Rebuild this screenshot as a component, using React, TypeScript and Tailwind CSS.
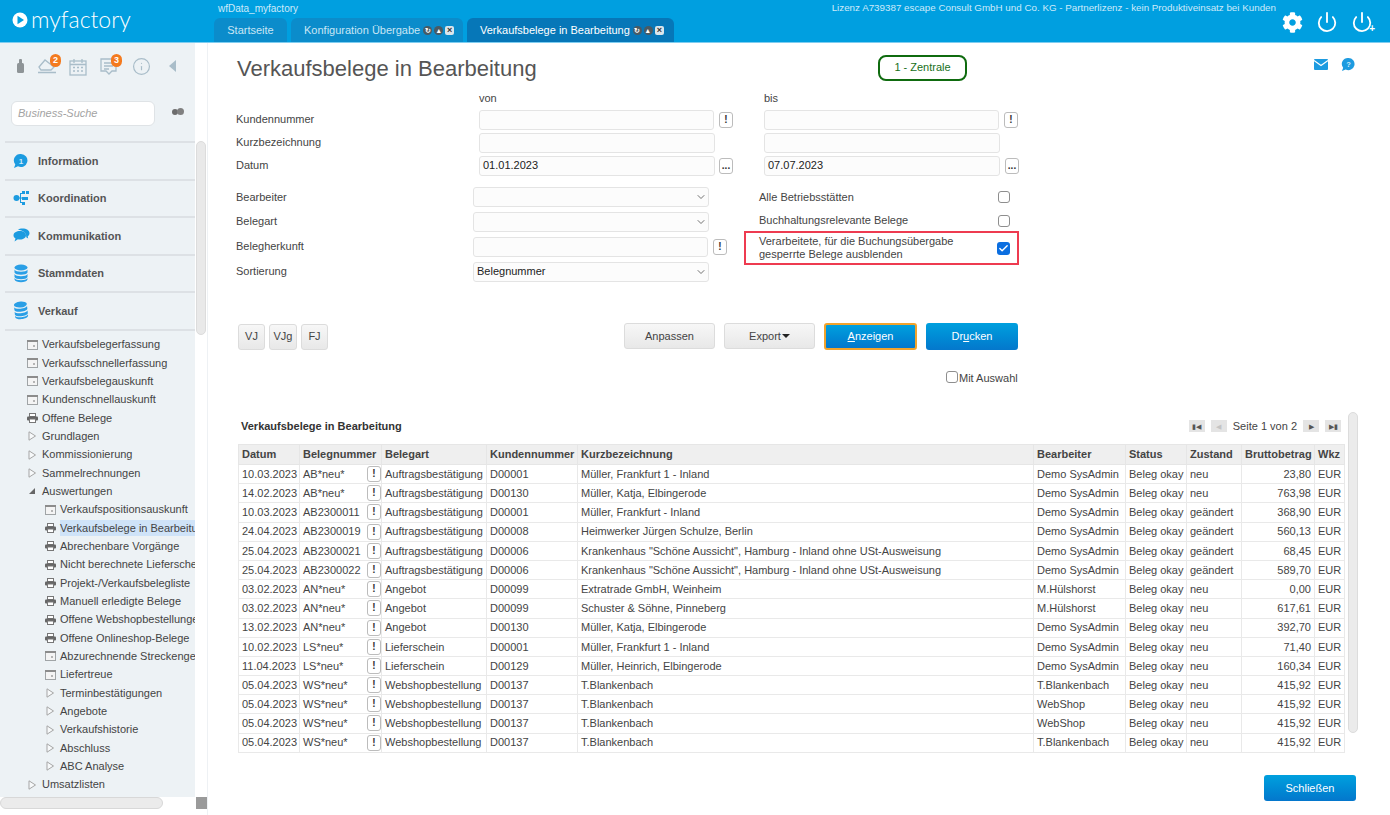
import { ChevronDown, Power, Check, Info } from 'lucide-react'
import { FaCog } from 'react-icons/fa'

const FONT = "font-['Liberation_Sans',Arial,sans-serif]"

const rows = [
  ['10.03.2023', 'AB*neu*', 'Auftragsbestätigung', 'D00001', 'Müller, Frankfurt 1 - Inland', 'Demo SysAdmin', 'neu', '23,80'],
  ['14.02.2023', 'AB*neu*', 'Auftragsbestätigung', 'D00130', 'Müller, Katja, Elbingerode', 'Demo SysAdmin', 'neu', '763,98'],
  ['10.03.2023', 'AB2300011', 'Auftragsbestätigung', 'D00001', 'Müller, Frankfurt - Inland', 'Demo SysAdmin', 'geändert', '368,90'],
  ['24.04.2023', 'AB2300019', 'Auftragsbestätigung', 'D00008', 'Heimwerker Jürgen Schulze, Berlin', 'Demo SysAdmin', 'geändert', '560,13'],
  ['25.04.2023', 'AB2300021', 'Auftragsbestätigung', 'D00006', 'Krankenhaus "Schöne Aussicht", Hamburg - Inland ohne USt-Ausweisung', 'Demo SysAdmin', 'geändert', '68,45'],
  ['25.04.2023', 'AB2300022', 'Auftragsbestätigung', 'D00006', 'Krankenhaus "Schöne Aussicht", Hamburg - Inland ohne USt-Ausweisung', 'Demo SysAdmin', 'geändert', '589,70'],
  ['03.02.2023', 'AN*neu*', 'Angebot', 'D00099', 'Extratrade GmbH, Weinheim', 'M.Hülshorst', 'neu', '0,00'],
  ['03.02.2023', 'AN*neu*', 'Angebot', 'D00099', 'Schuster & Söhne, Pinneberg', 'M.Hülshorst', 'neu', '617,61'],
  ['13.02.2023', 'AN*neu*', 'Angebot', 'D00130', 'Müller, Katja, Elbingerode', 'Demo SysAdmin', 'neu', '392,70'],
  ['10.02.2023', 'LS*neu*', 'Lieferschein', 'D00001', 'Müller, Frankfurt 1 - Inland', 'Demo SysAdmin', 'neu', '71,40'],
  ['11.04.2023', 'LS*neu*', 'Lieferschein', 'D00129', 'Müller, Heinrich, Elbingerode', 'Demo SysAdmin', 'neu', '160,34'],
  ['05.04.2023', 'WS*neu*', 'Webshopbestellung', 'D00137', 'T.Blankenbach', 'T.Blankenbach', 'neu', '415,92'],
  ['05.04.2023', 'WS*neu*', 'Webshopbestellung', 'D00137', 'T.Blankenbach', 'WebShop', 'neu', '415,92'],
  ['05.04.2023', 'WS*neu*', 'Webshopbestellung', 'D00137', 'T.Blankenbach', 'WebShop', 'neu', '415,92'],
  ['05.04.2023', 'WS*neu*', 'Webshopbestellung', 'D00137', 'T.Blankenbach', 'T.Blankenbach', 'neu', '415,92'],
]

const tree: { label: string; icon: 'win' | 'print' | 'tri' | 'open'; level: number; active?: boolean }[] = [
  { label: 'Verkaufsbelegerfassung', icon: 'win', level: 0 },
  { label: 'Verkaufsschnellerfassung', icon: 'win', level: 0 },
  { label: 'Verkaufsbelegauskunft', icon: 'win', level: 0 },
  { label: 'Kundenschnellauskunft', icon: 'win', level: 0 },
  { label: 'Offene Belege', icon: 'print', level: 0 },
  { label: 'Grundlagen', icon: 'tri', level: 0 },
  { label: 'Kommissionierung', icon: 'tri', level: 0 },
  { label: 'Sammelrechnungen', icon: 'tri', level: 0 },
  { label: 'Auswertungen', icon: 'open', level: 0 },
  { label: 'Verkaufspositionsauskunft', icon: 'win', level: 1 },
  { label: 'Verkaufsbelege in Bearbeitung', icon: 'print', level: 1, active: true },
  { label: 'Abrechenbare Vorgänge', icon: 'print', level: 1 },
  { label: 'Nicht berechnete Lieferscheine', icon: 'print', level: 1 },
  { label: 'Projekt-/Verkaufsbelegliste', icon: 'print', level: 1 },
  { label: 'Manuell erledigte Belege', icon: 'print', level: 1 },
  { label: 'Offene Webshopbestellungen', icon: 'print', level: 1 },
  { label: 'Offene Onlineshop-Belege', icon: 'print', level: 1 },
  { label: 'Abzurechnende Streckengeschäfte', icon: 'win', level: 1 },
  { label: 'Liefertreue', icon: 'win', level: 1 },
  { label: 'Terminbestätigungen', icon: 'tri', level: 1 },
  { label: 'Angebote', icon: 'tri', level: 1 },
  { label: 'Verkaufshistorie', icon: 'tri', level: 1 },
  { label: 'Abschluss', icon: 'tri', level: 1 },
  { label: 'ABC Analyse', icon: 'tri', level: 1 },
  { label: 'Umsatzlisten', icon: 'tri', level: 0 },
]

const TreeIcon = ({ type }: { type: string }) => {
  if (type === 'win')
    return (
      <svg width="11" height="10" viewBox="0 0 11 10">
        <rect x="0.5" y="0.5" width="10" height="9" fill="#f4f4f4" stroke="#a0a4a6" />
        <rect x="0" y="0" width="11" height="2" fill="#8c8c8c" />
        <rect x="6" y="5" width="2" height="2" fill="#b5b5b5" />
      </svg>
    )
  if (type === 'print')
    return (
      <svg width="11" height="10" viewBox="0 0 11 10">
        <rect x="2.5" y="0.5" width="6" height="3" fill="#fff" stroke="#777" />
        <rect x="0" y="3.5" width="11" height="4" rx="1" fill="#666" />
        <rect x="2.5" y="6" width="6" height="3.5" fill="#fff" stroke="#777" />
      </svg>
    )
  if (type === 'open')
    return (
      <svg width="10" height="10" viewBox="0 0 10 10">
        <path d="M8 2v6H2z" fill="#666" />
      </svg>
    )
  return (
    <svg width="10" height="10" viewBox="0 0 10 10">
      <path d="M2 .8 8.5 5 2 9.2z" fill="#f7f9fa" stroke="#a5a5a5" />
    </svg>
  )
}

const DbIcon = ({ tilt }: { tilt?: boolean }) => (
  <svg width="16" height="19" viewBox="0 0 16 19" className={tilt ? '-rotate-6' : ''}>
    <ellipse cx="8" cy="3.5" rx="6.5" ry="3" fill="#2a9fe6" />
    <path d="M1.5 5.5c1 3 12 3 13 0v3c-1 3-12 3-13 0z" fill="#2a9fe6" />
    <path d="M1.5 10c1 3 12 3 13 0v3c-1 3-12 3-13 0z" fill="#2a9fe6" />
    <path d="M1.5 14c1 3 12 3 13 0v1.5c-1 3.5-12 3.5-13 0z" fill="#2a9fe6" />
  </svg>
)

const SectionIcon = ({ name }: { name: string }) => {
  if (name === 'Information')
    return (
      <svg width="16" height="16" viewBox="0 0 16 16">
        <path d="M8 1a6.5 6.5 0 1 1-3 12.3L1 15l1.3-3.5A6.5 6.5 0 0 1 8 1z" fill="#1c9be0" />
        <text x="8" y="11" fontSize="8" fontWeight="700" textAnchor="middle" fill="#cfeafa">1</text>
      </svg>
    )
  if (name === 'Koordination')
    return (
      <svg width="16" height="16" viewBox="0 0 16 16" fill="#1c9be0">
        <circle cx="3.5" cy="8" r="3" />
        <rect x="9" y="1" width="3" height="3" />
        <rect x="13" y="1" width="3" height="3" />
        <rect x="9" y="7" width="6" height="3" />
        <rect x="9" y="12" width="3" height="3" />
        <path d="M5 7.5h4v1H5zM7 3h2v1H8v8h1v1H7z" />
      </svg>
    )
  if (name === 'Kommunikation')
    return (
      <svg width="17" height="15" viewBox="0 0 17 15" fill="#1c9be0">
        <path d="M7 3c3.5 0 6 1.800 6 4.300S10.500 11.600 7 11.600c-.8 0-1.500-.1-2.100-.3L1.500 13.500l1-3C1.100 9.700.5 8.600.5 7.300.5 4.800 3.500 3 7 3z" />
        <path d="M5 1.800C6 .9 7.500.5 9.500.5c4 0 7 2 7 4.700 0 1.400-.7 2.400-1.800 3.200l.5 2-2-1.200c.6-3.700-3-7-8.700-7.400z" />
      </svg>
    )
  return <DbIcon tilt={name === 'Verkauf'} />
}

const Badge = ({ n, className }: { n: number; className: string }) => (
  <span className={`absolute ${className} flex h-[13px] w-[11px] items-center justify-center rounded-full bg-[#f47a1f] text-[9px] leading-none font-bold text-white`}>
    {n}
  </span>
)

const Sidebar = () => (
  <aside className="relative flex w-[208px] shrink-0 flex-col overflow-hidden border-r border-[#eef1f4] bg-white">
    <div className="flex h-full w-[195px] flex-col bg-[#edf2f5]">
      {/* icon row */}
      <div className="flex h-[34px] shrink-0 items-end gap-[9px] pb-[1px] pl-[15px] text-[#a9bdc9]">
        <svg width="11" height="15" viewBox="0 0 11 15" fill="#8e9497" className="mb-[2px]">
          <rect x="4" y="0" width="3" height="5" rx="1" />
          <rect x="2" y="4" width="7" height="10" rx="1.5" />
        </svg>
        <span className="relative ml-[3px] block h-[18px] w-[22px]">
          <svg width="19" height="16" viewBox="0 0 19 16" fill="none" stroke="#a9bdc9" strokeWidth="1.3">
            <path d="M1 9 7 2l9 7-3 3H3zM0 14.5h18" />
          </svg>
          <Badge n={2} className="top-[-4px] left-[12px]" />
        </span>
        <svg width="18" height="18" viewBox="0 0 18 18" fill="none" stroke="#a9bdc9" strokeWidth="1.3">
          <rect x="1" y="3" width="16" height="14" />
          <path d="M1 6.5h16M5 1v4M13 1v4M4 9.5h2M8 9.5h2M12 9.5h2M4 13h2M8 13h2M12 13h2" />
        </svg>
        <span className="relative ml-[4px] block h-[18px] w-[22px]">
          <svg width="17" height="18" viewBox="0 0 17 18" fill="none" stroke="#a9bdc9" strokeWidth="1.3">
            <path d="M1 1h15v12h-4l-3 3-3-3H1zM4 5h9M4 8h9M4 11h5" />
          </svg>
          <Badge n={3} className="top-[-4px] left-[11px]" />
        </span>
        <Info size={19} strokeWidth={1.5} className="ml-[1px]" />
        <span className="mb-[4px] ml-[9px] h-0 w-0 border-y-[6px] border-r-[7px] border-y-transparent border-r-[#a9bdc9]" />
      </div>

      {/* search */}
      <div className="mt-[24px] flex shrink-0 items-center pl-[11px]">
        <div className="flex h-[25px] w-[144px] items-center rounded-[6px] border border-[#dfe3e6] bg-white pl-[6px] text-[11px] text-[#a3a3a3] italic">
          Business-Suche
        </div>
        <span className="mb-[3px] ml-[17px] flex items-center">
          <span className="h-[6px] w-[6px] rounded-full bg-[#6d6d6d]" />
          <span className="mb-[1px] -ml-[1px] h-[7px] w-[7px] rounded-full bg-[#808080]" />
        </span>
      </div>

      {/* sections */}
      <div className="mt-[15px] ml-[5px] shrink-0 border-t-2 border-[#dde1e5]">
        {['Information', 'Koordination', 'Kommunikation', 'Stammdaten', 'Verkauf'].map((name) => (
          <div key={name} className="flex h-[37.5px] items-center border-b-2 border-[#dde1e5] text-[11px] font-bold text-[#555]">
            <span className="flex w-[33px] justify-center pr-[2px] pl-[1px]">
              <SectionIcon name={name} />
            </span>
            {name}
          </div>
        ))}
      </div>

      {/* tree */}
      <div className="mt-[5px] overflow-hidden">
        {tree.map((t) => (
          <div
            key={t.label}
            className={`flex h-[18.33px] items-center text-[11px] whitespace-nowrap text-[#444] ${t.level === 1 ? 'pl-[45px]' : 'pl-[27px]'}`}
          >
            <span className="flex w-[15px] shrink-0">
              <TreeIcon type={t.icon} />
            </span>
            <span className={t.active ? 'bg-[#cfe3f8]' : ''}>{t.label}</span>
          </div>
        ))}
      </div>
    </div>

    {/* scrollbars */}
    <div className="absolute top-[98px] left-[196px] h-[194px] w-[10px] rounded-[5px] border border-[#dcdcdc] bg-[#e9e9e9]" />
    <div className="absolute bottom-0 left-0 flex h-[18px] w-[207px] items-start bg-white">
      <div className="h-[12px] w-[163px] rounded-[6px] border border-[#d8d8d8] bg-[#ebebeb]" />
      <div className="ml-[33px] h-[12px] w-[11px] bg-[#9a9a9a]" />
    </div>
  </aside>
)

const Field = ({ w, value, select }: { w: string; value?: string; select?: boolean }) => (
  <div className={`flex h-[20px] ${w} items-center justify-between rounded-[3px] border border-[#e4e4e4] bg-[#fcfcfc] pr-[1px] pl-[3px] text-[11px] text-[#222]`}>
    <span>{value}</span>
    {select && <ChevronDown size={12} strokeWidth={1.5} className="text-[#444]" />}
  </div>
)

const MiniBtn = ({ children }: { children: string }) => (
  <span className="flex h-[16px] w-[14px] items-center justify-center rounded-[3px] border border-[#bcbcbc] bg-white text-[10px] leading-none font-bold text-[#333]">
    {children}
  </span>
)

const FormRow = ({ label, children }: { label: string; children: React.ReactNode }) => (
  <div className="flex h-[23px] items-center">
    <span className="w-[243px] text-[11px] text-[#444]">{label}</span>
    {children}
  </div>
)

const Checkbox = ({ checked }: { checked?: boolean }) =>
  checked ? (
    <span className="flex h-[13px] w-[13px] items-center justify-center rounded-[3px] bg-[#0b6ee0]">
      <Check size={11} strokeWidth={3} className="text-white" />
    </span>
  ) : (
    <span className="block h-[12px] w-[12px] rounded-[3px] border border-[#8e8e8e] bg-white" />
  )

const GreyBtn = ({ children, w }: { children: React.ReactNode; w: string }) => (
  <button className={`h-[26px] ${w} rounded-[3px] border border-[#dcdcdc] bg-gradient-to-b from-[#f7f7f7] to-[#e8e8e8] text-[11px] text-[#444]`}>
    {children}
  </button>
)

const PagerBtn = ({ children, dim }: { children: React.ReactNode; dim?: boolean }) => (
  <span className={`flex h-[12px] w-[16px] items-center justify-center bg-[#e4e4e4] text-[7px] leading-none ${dim ? 'text-[#c4c4c4]' : 'text-[#555]'}`}>
    {children}
  </span>
)

const th = 'border border-[#e6e6e6] bg-[#efefef] px-[3px] text-left text-[11px] font-bold text-[#444]'
const td = 'border border-[#e9e9e9] px-[3px] text-[11px] whitespace-nowrap text-[#444]'

const Main = () => (
  <main className="relative flex flex-1 flex-col pl-[28px]">
    {/* title row */}
    <div className="flex h-[51px] items-center">
      <h1 className="w-[642px] pl-px text-[22px] leading-none text-[#555]">Verkaufsbelege in Bearbeitung</h1>
      <div className="mb-[2px] flex h-[26px] w-[89px] items-center justify-center rounded-[8px] border-2 border-[#0f6b0f] text-[11px] text-[#17701a]">
        1 - Zentrale
      </div>
      <svg width="14" height="11" viewBox="0 0 14 11" className="mb-[9px] ml-[347px]">
        <rect width="14" height="11" rx="1" fill="#1d9be0" />
        <path d="M0 1.5 7 6.5l7-5" fill="none" stroke="#fff" strokeWidth="1.2" />
      </svg>
      <svg width="15" height="15" viewBox="0 0 16 16" className="mb-[9px] ml-[13px]">
        <path d="M8 1a6.5 6.5 0 1 1-3 12.3L1 15l1.3-3.5A6.5 6.5 0 0 1 8 1z" fill="#1d9be0" />
        <text x="8" y="11" fontSize="8" fontWeight="700" textAnchor="middle" fill="#d6eefb">?</text>
      </svg>
    </div>

    {/* von / bis */}
    <div className="flex h-[8px] items-center text-[11px] text-[#444]">
      <span className="ml-[243px] w-[285px]">von</span>
      <span>bis</span>
    </div>

    <div className="mt-[6px]">
      <FormRow label="Kundennummer">
        <Field w="w-[235px]" />
        <span className="ml-[5px]"><MiniBtn>!</MiniBtn></span>
        <span className="ml-[31px]"><Field w="w-[235px]" /></span>
        <span className="ml-[5px]"><MiniBtn>!</MiniBtn></span>
      </FormRow>
    </div>
    <FormRow label="Kurzbezeichnung">
      <Field w="w-[236px]" />
      <span className="ml-[49px]"><Field w="w-[236px]" /></span>
    </FormRow>
    <FormRow label="Datum">
      <Field w="w-[236px]" value="01.01.2023" />
      <span className="ml-[4px]"><MiniBtn>...</MiniBtn></span>
      <span className="ml-[31px]"><Field w="w-[236px]" value="07.07.2023" /></span>
      <span className="ml-[5px]"><MiniBtn>...</MiniBtn></span>
    </FormRow>

    {/* select block */}
    <div className="mt-[8px] flex">
      <div className="flex flex-col">
        <div className="flex h-[24px] items-center">
          <span className="w-[237px] text-[11px] text-[#444]">Bearbeiter</span>
          <Field w="w-[236px]" select />
        </div>
        <div className="flex h-[25px] items-center">
          <span className="w-[237px] text-[11px] text-[#444]">Belegart</span>
          <Field w="w-[236px]" select />
        </div>
        <div className="flex h-[25px] items-center">
          <span className="w-[237px] text-[11px] text-[#444]">Belegherkunft</span>
          <Field w="w-[235px]" />
          <span className="ml-[5px]"><MiniBtn>!</MiniBtn></span>
        </div>
        <div className="flex h-[25px] items-center">
          <span className="w-[237px] text-[11px] text-[#444]">Sortierung</span>
          <Field w="w-[236px]" value="Belegnummer" select />
        </div>
      </div>
      <div className="ml-[17px] flex w-[275px] flex-col text-[11px] text-[#444]">
        <div className="flex h-[24px] items-center justify-between pr-[9px] pl-[15px]">
          <span>Alle Betriebsstätten</span>
          <Checkbox />
        </div>
        <div className="flex h-[23px] items-center justify-between pr-[9px] pl-[15px]">
          <span>Buchhaltungsrelevante Belege</span>
          <Checkbox />
        </div>
        <div className="-mt-[1px] flex h-[34px] items-center justify-between border-2 border-[#ee3b50] pr-[7px] pl-[13px] leading-[13px]">
          <span>
            Verarbeitete, für die Buchungsübergabe
            <br />
            gesperrte Belege ausblenden
          </span>
          <Checkbox checked />
        </div>
      </div>
    </div>

    {/* button row */}
    <div className="mt-[39px] flex h-[27px] items-center pl-[2px]">
      <div className="flex gap-[4px]">
        {['VJ', 'VJg', 'FJ'].map((b) => (
          <GreyBtn key={b} w={b === 'VJg' ? 'w-[28px]' : 'w-[27px]'}>{b}</GreyBtn>
        ))}
      </div>
      <div className="ml-[296px] flex gap-[9px]">
        <GreyBtn w="w-[91px]">Anpassen</GreyBtn>
        <GreyBtn w="w-[91px]">
          <span className="flex items-center justify-center">
            Export
            <span className="ml-px h-0 w-0 border-x-[4px] border-t-[4px] border-x-transparent border-t-[#222]" />
          </span>
        </GreyBtn>
        <button className="h-[27px] w-[93px] rounded-[3px] border-2 border-[#f2a32c] bg-gradient-to-b from-[#00a0de] to-[#0477cc] text-[11px] text-white">
          <u>A</u>nzeigen
        </button>
        <button className="h-[27px] w-[92px] rounded-[3px] bg-gradient-to-b from-[#00a0de] to-[#0477cc] text-[11px] text-white">
          Dr<u>u</u>cken
        </button>
      </div>
    </div>

    {/* Mit Auswahl */}
    <div className="mt-[20px] ml-[710px] flex h-[16px] items-center text-[11px] text-[#444]">
      <span className="-mt-[2px] mr-[1px] block h-[12px] w-[12px] rounded-[3px] border border-[#8e8e8e] bg-white" />
      Mit Auswahl
    </div>

    {/* table header */}
    <div className="mt-[29px] flex h-[22px] w-[1105px] items-center justify-between pl-[5px]">
      <span className="text-[11px] font-bold text-[#333]">Verkaufsbelege in Bearbeitung</span>
      <div className="flex items-center gap-[6px] text-[11px] text-[#444]">
        <PagerBtn>▮◀</PagerBtn>
        <PagerBtn dim>◀</PagerBtn>
        <span>Seite 1 von 2</span>
        <PagerBtn>▶</PagerBtn>
        <PagerBtn>▶▮</PagerBtn>
      </div>
    </div>

    <table className="mt-[7px] ml-[2px] w-[1106px] table-fixed border-collapse">
      <colgroup>
        <col className="w-[61px]" />
        <col className="w-[82px]" />
        <col className="w-[105px]" />
        <col className="w-[91px]" />
        <col className="w-[456px]" />
        <col className="w-[92px]" />
        <col className="w-[61px]" />
        <col className="w-[55px]" />
        <col className="w-[73px]" />
        <col className="w-[30px]" />
      </colgroup>
      <thead>
        <tr className="h-[20px]">
          {['Datum', 'Belegnummer', 'Belegart', 'Kundennummer', 'Kurzbezeichnung', 'Bearbeiter', 'Status', 'Zustand', 'Bruttobetrag', 'Wkz'].map((h) => (
            <th key={h} className={`${th} whitespace-nowrap`}>{h}</th>
          ))}
        </tr>
      </thead>
      <tbody>
        {rows.map((r, i) => (
          <tr key={i} className="h-[19.2px]">
            <td className={td}>{r[0]}</td>
            <td className={`${td} relative`}>
              {r[1]}
              <span className="absolute top-[1px] right-0"><MiniBtn>!</MiniBtn></span>
            </td>
            <td className={td}>{r[2]}</td>
            <td className={td}>{r[3]}</td>
            <td className={td}>{r[4]}</td>
            <td className={td}>{r[5]}</td>
            <td className={td}>Beleg okay</td>
            <td className={td}>{r[6]}</td>
            <td className={`${td} text-right`}>{r[7]}</td>
            <td className={td}>EUR</td>
          </tr>
        ))}
      </tbody>
    </table>

    {/* table scrollbar */}
    <div className="absolute top-[369px] left-[1140px] h-[321px] w-[10px] rounded-[5px] border border-[#dcdcdc] bg-[#ebebeb]" />

    <div className="mt-[22px] flex w-[1120px] justify-end">
      <button className="h-[26px] w-[92px] rounded-[3px] bg-gradient-to-b from-[#00a0de] to-[#0477cc] text-[11px] text-white">
        Schließen
      </button>
    </div>
  </main>
)

function TabMarks() {
  return (
    <span className="ml-[3px] flex gap-[2px]">
      <span className="flex h-[9px] w-[9px] items-center justify-center rounded-full bg-[#4a5a63] text-[7px] leading-none font-bold text-white">↻</span>
      <span className="flex h-[9px] w-[9px] items-center justify-center rounded-full bg-[#4a5a63] text-[7px] leading-none font-bold text-white">▴</span>
      <span className="flex h-[9px] w-[9px] items-center justify-center rounded-[2px] bg-[#dbe6ec] text-[9px] leading-none font-bold text-[#333]">×</span>
    </span>
  )
}

export default function App() {
  return (
    <div className={`${FONT} flex h-[815px] w-[1390px] flex-col overflow-hidden bg-white`}>
      <header className="flex h-[43px] shrink-0 border-b border-[#7fcdf0] bg-[#009fe0] text-white">
        <div className="flex w-[214px] shrink-0 items-center pb-[3px] pl-[12px]">
          <svg width="16" height="16" viewBox="0 0 16 16">
            <circle cx="8" cy="8" r="7.5" fill="#fff" />
            <path d="M5.5 3.800 12 8l-6.500 4.200z" fill="#009fe0" />
          </svg>
          <span className="ml-[3px] font-['Lato',sans-serif] text-[23px] leading-none font-light">myfactory</span>
        </div>
        <div className="flex flex-1 flex-col">
          <div className="flex h-[18px] justify-between pt-[1px] pr-[114px] pl-[4px] text-[10px] text-[#cdeafa]">
            <span>wfData_myfactory</span>
            <span className="text-[9.8px]">Lizenz A739387 escape Consult GmbH und Co. KG - Partnerlizenz - kein Produktiveinsatz bei Kunden</span>
          </div>
          <div className="flex h-[24px] gap-[4px]">
            <div className="flex w-[73px] items-center justify-center rounded-t-[6px] bg-[#0b8ccb] text-[11px] text-[#c9e6f5]">Startseite</div>
            <div className="flex w-[172px] items-center rounded-t-[6px] bg-[#0b8ccb] pl-[13px] text-[11px] text-[#c9e6f5]">
              Konfiguration Übergabe
              <TabMarks />
            </div>
            <div className="flex w-[207px] items-center rounded-t-[6px] bg-[#0677b8] pl-[13px] text-[11px] text-white">
              Verkaufsbelege in Bearbeitung
              <TabMarks />
            </div>
          </div>
        </div>
        <div className="absolute top-[11px] left-[1282px] flex items-center gap-[13px]">
          <FaCog size={21} />
          <Power size={22} strokeWidth={2} />
          <span className="relative block h-[22px] w-[22px]">
            <Power size={22} strokeWidth={2} />
            <span className="absolute right-[-2px] bottom-[-1px] text-[10px] leading-none font-bold">+</span>
          </span>
        </div>
      </header>
      <div className="flex min-h-0 flex-1">
        <Sidebar />
        <Main />
      </div>
    </div>
  )
}
